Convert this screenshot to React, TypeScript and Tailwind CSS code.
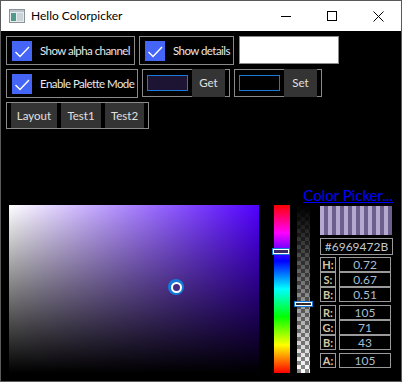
import React from 'react'

const CheckBox = ({ label, width }: { label: string; width: string }) => (
  <div className={`${width} h-[29px] border border-[#8a8a8a] flex items-center pl-[5px]`}>
    <div className="w-[20px] h-[20px] bg-[#4465f6] flex items-center justify-center">
      <svg width="20" height="20" viewBox="0 0 20 20">
        <path d="M3.5 11 L8 15.5 L17 6" stroke="#fff" strokeWidth="1.4" fill="none" />
      </svg>
    </div>
    <span className="ml-[8px] text-[11.5px] tracking-[-0.55px] text-[#e8e8e8] whitespace-nowrap">{label}</span>
  </div>
)

const SwatchButton = ({ fill, label }: { fill: string; label: string }) => (
  <div className="w-[88px] h-[28px] border border-[#8a8a8a] flex items-center pl-[4px]">
    <div className={`w-[41px] h-[16px] border border-[#1a7ad6] ${fill}`} />
    <button className="ml-[4px] w-[33px] h-[28px] -my-px bg-[#343434] text-[11.5px] text-[#e0e0e0]">{label}</button>
  </div>
)

const ValueRow = ({ label, value, className = '' }: { label: string; value: string; className?: string }) => (
  <div className={`flex h-[15px] ${className}`}>
    <div className="w-[16px] h-[15px] border border-[#9a9a9a] flex items-center justify-center text-[11px] font-bold text-[#d6c6a4] leading-[11px]">
      {label}
    </div>
    <div className="ml-[3px] w-[52px] h-[15px] border border-[#9a9a9a] flex items-center justify-center text-[12px] text-[#a9bdd0] leading-[12px]">
      {value}
    </div>
  </div>
)

export default function App() {
  return (
    <div className="w-[402px] h-[382px] border border-[#5a5a5a] bg-black flex flex-col overflow-hidden font-['Lato',sans-serif]">
      {/* Title bar */}
      <div className="h-[30px] bg-white flex items-center shrink-0">
        <svg className="ml-[8px]" width="16" height="14" viewBox="0 0 16 14">
          <rect x="0.5" y="0.5" width="15" height="13" fill="#e8ecef" stroke="#8c9298" />
          <rect x="1" y="1" width="14" height="2" fill="#b9c4cc" />
          <rect x="2" y="4" width="5" height="8" fill="#4f9a8a" />
          <rect x="8" y="4" width="6" height="8" fill="#c9d3da" />
        </svg>
        <span className="ml-[6px] text-[12px] text-black">Hello Colorpicker</span>
        <div className="ml-auto flex h-full">
          <div className="w-[46px] h-full flex items-center justify-center">
            <svg width="10" height="10" viewBox="0 0 10 10">
              <path d="M0 5.5 H10" stroke="#000" strokeWidth="1" />
            </svg>
          </div>
          <div className="w-[46px] h-full flex items-center justify-center">
            <svg width="10" height="10" viewBox="0 0 10 10">
              <rect x="0.5" y="0.5" width="9" height="9" stroke="#000" strokeWidth="1" fill="none" />
            </svg>
          </div>
          <div className="w-[46px] h-full flex items-center justify-center">
            <svg width="11" height="11" viewBox="0 0 11 11">
              <path d="M0.5 0.5 L10.5 10.5 M10.5 0.5 L0.5 10.5" stroke="#000" strokeWidth="1" />
            </svg>
          </div>
        </div>
      </div>

      {/* Content */}
      <div className="flex-1 px-[5px] pt-[5px]">
        <div className="flex items-start">
          <CheckBox label="Show alpha channel" width="w-[129px]" />
          <div className="ml-[4px]">
            <CheckBox label="Show details" width="w-[95px]" />
          </div>
          <div className="ml-[5px] w-[100px] h-[28px] bg-white border border-[#8a8a8a]" />
        </div>

        <div className="flex items-start mt-[4px]">
          <CheckBox label="Enable Palette Mode" width="w-[132px]" />
          <div className="ml-[4px]">
            <SwatchButton fill="bg-[#1d1433]" label="Get" />
          </div>
          <div className="ml-[4px]">
            <SwatchButton fill="bg-black" label="Set" />
          </div>
        </div>

        <div className="mt-[4px] w-[143px] h-[27px] border border-[#8a8a8a] flex items-stretch pl-[4px] gap-[4px]">
          <button className="w-[46px] bg-[#343434] text-[11.5px] text-[#e0e0e0]">Layout</button>
          <button className="w-[40px] bg-[#343434] text-[11.5px] text-[#e0e0e0]">Test1</button>
          <button className="w-[39px] bg-[#343434] text-[11.5px] text-[#e0e0e0]">Test2</button>
        </div>

        {/* Color picker */}
        <div className="mt-[54px] h-[22px] flex justify-end items-end pr-[3px]">
          <a className="text-[15px] leading-[20px] text-[#0000ff] underline">Color Picker...</a>
        </div>

        <div className="flex items-start">
          <div className="ml-[3px] w-[250px] h-[168px] relative bg-[linear-gradient(to_right,#ffffff,#5100ff)]">
            <div className="absolute inset-0 bg-[linear-gradient(to_top,#000000,transparent)]" />
            <div className="absolute left-[159px] top-[74px] w-[16px] h-[16px] rounded-full bg-[#1479d8] flex items-center justify-center">
              <div className="w-[11px] h-[11px] rounded-full bg-white flex items-center justify-center">
                <div className="w-[7px] h-[7px] rounded-full bg-[#472b82]" />
              </div>
            </div>
          </div>

          <div className="ml-[15px] w-[16px] h-[168px] relative bg-[linear-gradient(to_bottom,#ff0000,#ff00ff,#0000ff,#00ffff,#00ff00,#ffff00,#ff0000)]">
            <div className="absolute -left-[2px] top-[43px] w-[18px] h-[7px] border border-[#1479d8] bg-white p-px">
              <div className="w-full h-full bg-[#3a2a6a]" />
            </div>
          </div>

          <div className="ml-[7px] w-[13px] h-[168px] relative bg-[repeating-conic-gradient(#8a8a8a_0%_25%,#ffffff_0%_50%)] bg-[length:8px_8px]">
            <div className="absolute inset-0 bg-[linear-gradient(to_bottom,#000000,transparent)]" />
            <div className="absolute -left-[3px] top-[96px] w-[19px] h-[6px] border border-[#1479d8] bg-white p-px">
              <div className="w-full h-full bg-[#2a2a2a]" />
            </div>
          </div>

          <div className="ml-[10px] mt-px w-[73px] flex flex-col">
            <div className="w-[72px] h-[29px] bg-[repeating-linear-gradient(to_right,#b6a9d0_0px,#b6a9d0_4px,#6b5f8e_4px,#6b5f8e_8px)]" />
            <div className="mt-[3px] w-[73px] h-[17px] border border-[#9a9a9a] flex items-center justify-center text-[12px] text-[#c4c8cc] leading-[12px]">
              #6969472B
            </div>
            <ValueRow className="mt-[2px]" label="H:" value="0.72" />
            <ValueRow label="S:" value="0.67" />
            <ValueRow label="B:" value="0.51" />
            <ValueRow className="mt-[3px]" label="R:" value="105" />
            <ValueRow label="G:" value="71" />
            <ValueRow label="B:" value="43" />
            <ValueRow className="mt-[3px]" label="A:" value="105" />
          </div>
        </div>
      </div>
    </div>
  )
}
